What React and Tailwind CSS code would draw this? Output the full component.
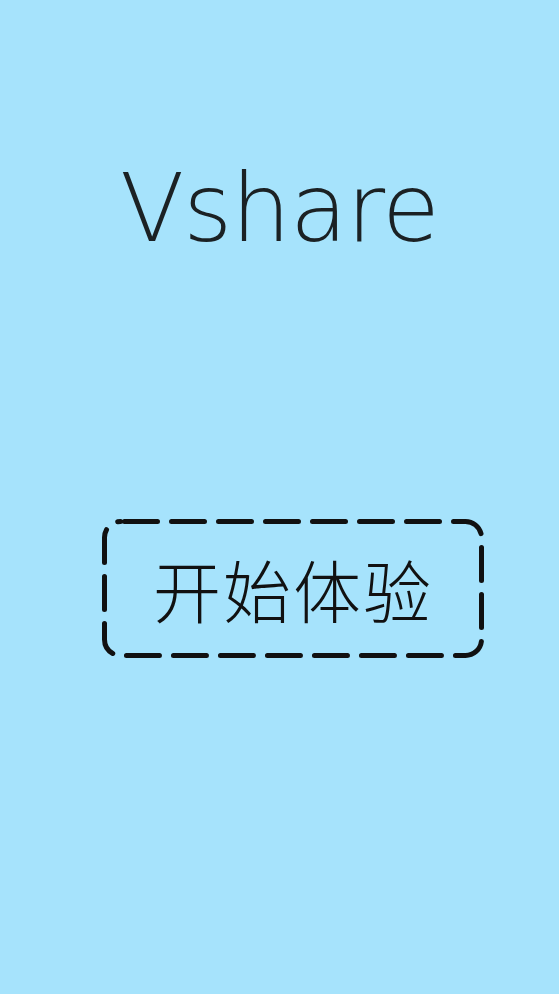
export default function App() {
  return (
    <div className="min-h-screen w-full bg-[#a6e3fc] flex flex-col items-center">
      <h1
        className="mt-[153px] text-[94px] leading-[112px] text-[#1b2124] font-extralight tracking-[-1px] pl-[0px]"
        style={{ fontFamily: '"DejaVu Sans", "Liberation Sans", sans-serif' }}
      >
        Vshare
      </h1>

      <button
        type="button"
        className="relative mt-[254px] ml-[27px] w-[382px] h-[139px] flex items-center justify-center"
      >
        <svg
          className="absolute inset-0"
          width="382"
          height="139"
          viewBox="0 0 382 139"
          fill="none"
        >
          <rect
            x="2.5"
            y="2.5"
            width="377"
            height="134"
            rx="16"
            stroke="#111"
            strokeWidth="5"
            strokeLinecap="round"
            strokeDasharray="33 14"
            strokeDashoffset="-4"
          />
        </svg>
        <span
          className="text-[68px] font-light text-[#111] tracking-[2px]"
          style={{ fontFamily: '"Noto Sans CJK SC", sans-serif' }}
        >
          开始体验
        </span>
      </button>
    </div>
  );
}
